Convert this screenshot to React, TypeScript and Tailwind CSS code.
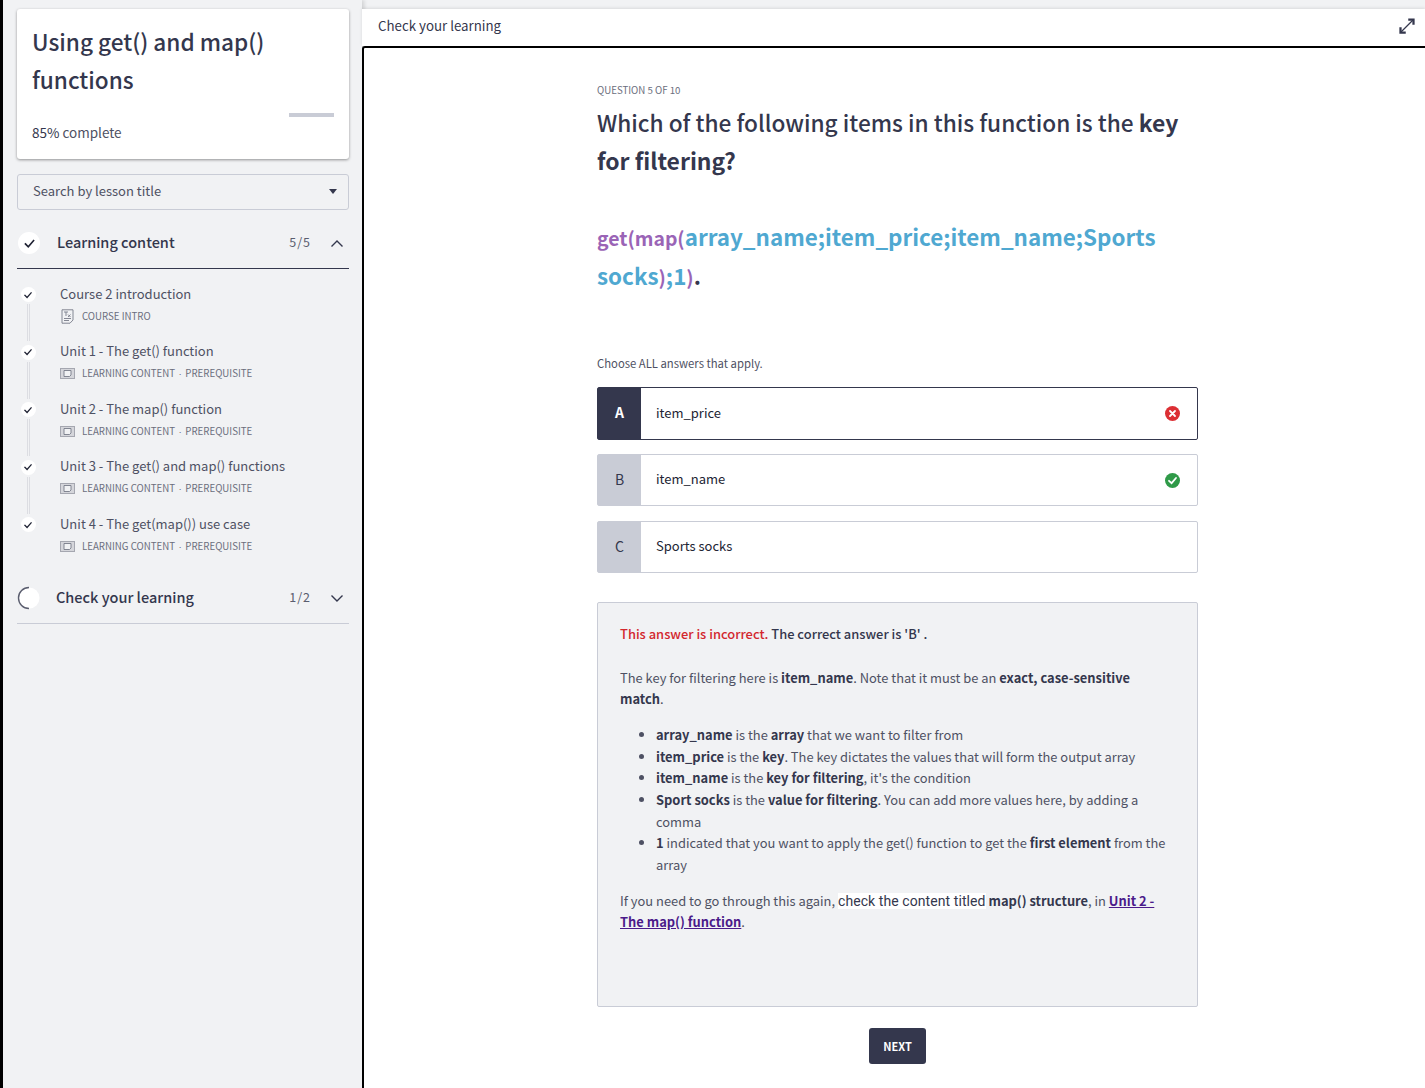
import React from "react";

const FONT = "[font-family:'Noto_Sans_CJK_SC','Source_Sans_Pro',sans-serif]";

function Check({ size, stroke = 2 }: { size: number; stroke?: number }) {
  return (
    <svg width={size} height={size} viewBox="0 0 16 16" fill="none" stroke="#1f2233" strokeWidth={stroke} strokeLinecap="square">
      <path d="M3 8.5 L6.5 12 L13 4.5" />
    </svg>
  );
}

function Chevron({ up }: { up?: boolean }) {
  return (
    <svg width="14" height="9" viewBox="0 0 14 9" fill="none" stroke="#34374d" strokeWidth="1.4">
      <path d={up ? "M1.5 7.5 L7 2 L12.5 7.5" : "M1.5 1.5 L7 7 L12.5 1.5"} />
    </svg>
  );
}

function DocIcon() {
  return (
    <svg width="13" height="15" viewBox="0 0 13 15" fill="none" stroke="#777a88" strokeWidth="0.9">
      <path d="M1 .8 H12 V11 L9 14.2 H1 Z" />
      <path d="M3 3 H7 M5 3 V7 M7 5.5 L9.5 8 M9.5 5.5 L7 8 M3 9.5 H10 M3 11.5 H8" />
    </svg>
  );
}

function SlideIcon() {
  return (
    <svg width="15" height="11" viewBox="0 0 15 11" fill="none">
      <rect x="0.5" y="0.5" width="14" height="10" fill="#d5d6db" stroke="#a5a7b0" />
      <path d="M4 2.5 H11 V7 L9.5 8.5 H4 Z" fill="#f1f2f4" stroke="#777a88" strokeWidth="0.9" />
    </svg>
  );
}

const lessons = [
  { title: "Course 2 introduction", sub: "COURSE INTRO", intro: true },
  { title: "Unit 1 - The get() function", sub: "LEARNING CONTENT", pre: true },
  { title: "Unit 2 - The map() function", sub: "LEARNING CONTENT", pre: true },
  { title: "Unit 3 - The get() and map() functions", sub: "LEARNING CONTENT", pre: true },
  { title: "Unit 4 - The get(map()) use case", sub: "LEARNING CONTENT", pre: true, last: true },
];

function Lesson({ title, sub, intro, last, pre }: { title: string; sub: string; intro?: boolean; last?: boolean; pre?: boolean }) {
  return (
    <div className="flex h-[57.6px]">
      <div className="flex w-[22px] flex-col items-center">
        <div className="flex h-[15px] w-[15px] shrink-0 items-center justify-center rounded-full bg-white">
          <Check size={10} stroke={2} />
        </div>
        {!last && <div className="mt-[2px] h-[37px] w-[3px] border-x border-[#dcdde2]" />}
      </div>
      <div className="ml-[21px] -mt-[3.4px]">
        <div className="h-[20px] whitespace-nowrap text-[13px] leading-[20px] text-[#4e5163]">{title}</div>
        <div className="mt-[4.4px] flex h-[16px] items-center">
          <div className="flex w-[22px] justify-start">{intro ? <span className="ml-[1px] flex"><DocIcon /></span> : <SlideIcon />}</div>
          <span className="whitespace-nowrap text-[9.7px] leading-[16px] text-[#6b6e7d]">
            {sub}
            {pre && (
              <>
                <span className="mx-[3.5px] font-['Liberation_Sans',sans-serif]">·</span>PREREQUISITE
              </>
            )}
          </span>
        </div>
      </div>
    </div>
  );
}

function Section({ title, count, border, up, icon, iconW }: { title: string; count: string; border: string; up?: boolean; icon: React.ReactNode; iconW: string }) {
  return (
    <div className={`flex h-[50px] items-center border-b ${border}`}>
      <div className={`flex justify-start ${iconW}`}>{icon}</div>
      <span className="-mt-[3px] text-[14.5px] font-medium text-[#34374d]">{title}</span>
      <span className="ml-auto -mt-[2px] text-[12.5px] tracking-[1px] text-[#5a5d6e]">{count}</span>
      <span className="ml-[19px] mr-[5px] flex"><Chevron up={up} /></span>
    </div>
  );
}

function Option({ letter, text, selected, status }: { letter: string; text: string; selected?: boolean; status?: "bad" | "good" }) {
  return (
    <div className={`flex h-[52px] rounded-[2px] border bg-white ${selected ? "h-[53px] border-[#34374d]" : "border-[#c9ccd6]"}`}>
      <div className={`flex w-[43px] items-center justify-center pb-[2px] text-[14px] ${selected ? "bg-[#34374d] font-bold text-white" : "bg-[#c9ccd6] text-[#34374d]"}`}>
        {letter}
      </div>
      <div className="ml-[15px] flex items-center pb-[2px] text-[13px] text-[#222433]">{text}</div>
      {status && (
        <div className="ml-auto mr-[17px] flex items-center">
          <svg width="15" height="15" viewBox="0 0 15 15">
            <circle cx="7.5" cy="7.5" r="7.5" fill={status === "bad" ? "#dc2f34" : "#2f9a48"} />
            {status === "bad" ? (
              <path d="M5 5 L10 10 M10 5 L5 10" stroke="#fff" strokeWidth="1.8" strokeLinecap="round" />
            ) : (
              <path d="M4 7.8 L6.6 10.2 L11 5" stroke="#fff" strokeWidth="1.8" fill="none" strokeLinecap="round" />
            )}
          </svg>
        </div>
      )}
    </div>
  );
}

export default function App() {
  return (
    <div className={`flex h-[1088px] w-[1425px] overflow-hidden border-l-[3px] border-black bg-[#f1f2f4] ${FONT}`}>
      <aside className="w-[359px] shrink-0 pl-[14px] pr-[13px] pt-[9px] shadow-[2px_0_4px_rgba(0,0,0,0.15)]">
        <div className="h-[150px] rounded-[3px] bg-white px-[15px] pt-[14px] shadow-[0_1px_3px_rgba(0,0,0,0.4)]">
          <h1 className="text-[22.6px] font-medium leading-[38px] text-[#34374d]">Using get() and map() functions</h1>
          <div className="mt-[14px] flex h-[4px] justify-end">
            <div className="w-[45px] bg-[#c9ccd6]" />
          </div>
          <div className="mt-[4px] text-[13.5px] leading-[22px] text-[#4e5163]">
            <span className="text-[#34374d]">85%</span> complete
          </div>
        </div>
        <div className="mt-[15px] flex h-[36px] items-center justify-between rounded-[3px] border border-[#c9ccd6] pb-[2px] pl-[15px] pr-[11px] text-[13px] text-[#4e5163]">
          <span>Search by lesson title</span>
          <span className="h-0 w-0 border-x-[4px] border-t-[5px] border-x-transparent border-t-[#34374d]" />
        </div>
        <div className="mt-[8px]">
          <Section
            title="Learning content"
            count="5/5"
            up
            iconW="w-[40px] pl-[1px]"
            border="border-[#34374d] h-[51px]"
            icon={
              <span className="flex h-[22px] w-[22px] items-center justify-center rounded-full bg-white">
                <Check size={13} />
              </span>
            }
          />
        </div>
        <div className="pt-[18px]">
          {lessons.map((l) => (
            <Lesson key={l.title} {...l} />
          ))}
        </div>
        <div className="mt-[-1px]">
          <Section
            title="Check your learning"
            count="1/2"
            iconW="w-[39px]"
            border="border-[#c9ccd6]"
            icon={
              <svg width="24" height="24" viewBox="0 0 24 24" fill="none">
                <circle cx="12" cy="12" r="10.5" fill="#fff" />
                <path d="M12 1.5 A10.5 10.5 0 0 0 12 22.5" stroke="#5a5d6e" strokeWidth="1.4" />
              </svg>
            }
          />
        </div>
      </aside>
      <main className="flex min-w-0 flex-1 flex-col pt-[9px]">
        <div className="flex h-[37px] shrink-0 items-center justify-between bg-white pl-[16px] pr-[8px] text-[13.3px] text-[#34374d] shadow-[0_-1px_3px_rgba(0,0,0,0.1)]">
          <span className="pb-[3px]">Check your learning</span>
          <svg className="mb-[4px]" width="20" height="20" viewBox="0 0 16 16" fill="none" stroke="#34374d" strokeWidth="1">
            <path d="M3 13 L13 3" />
            <path d="M9 2.8 H13.2 V7 M2.8 9 V13.2 H7" strokeWidth="1.8" />
          </svg>
        </div>
        <div className="flex-1 rounded-tl-[3px] border-l-2 border-t-2 border-black bg-white">
          <div className="ml-[233px] w-[601px] pt-[34px]">
            <div className="text-[9.7px] leading-[16px] text-[#6b6e7d]">QUESTION 5 OF 10</div>
            <h2 className="mt-[6px] text-[22.65px] font-medium leading-[38px] text-[#34374d]">
              Which of the following items in this function is the <b className="text-[22.9px] font-bold leading-none">key for filtering?</b>
            </h2>
            <p className="mt-[37px] text-[22.4px] font-bold leading-[39px] text-[#4fa8d1]">
              <span className="text-[19.4px] leading-none text-[#9a64b6]">get(map(</span>array_name;item_price;item_name;Sports socks<span className="text-[19.4px] leading-none text-[#9a64b6]">)</span>;1<span className="text-[19.4px] leading-none text-[#9a64b6]">)</span>
              <span className="text-[#34374d]">.</span>
            </p>
            <p className="mt-[58px] text-[11.3px] leading-[20px] text-[#4e5163]">Choose ALL answers that apply.</p>
            <div className="mt-[14px] flex flex-col gap-[14px]">
              <Option letter="A" text="item_price" selected status="bad" />
              <div className="flex flex-col gap-[15px]">
                <Option letter="B" text="item_name" status="good" />
                <Option letter="C" text="Sports socks" />
              </div>
            </div>
            <div className="mt-[29px] h-[405px] rounded-[2px] border border-[#c9ccd6] bg-[#f1f2f4] px-[22px] pt-[20px] text-[12.9px] leading-[21.6px] text-[#34374d]">
              <p className="font-medium">
                <span className="text-[#d3272e]">This answer is incorrect.</span> The correct answer is 'B' .
              </p>
              <p className="mt-[22px] text-[#4e5163]">
                The key for filtering here is <b className="text-[#34374d]">item_name</b>. Note that it must be an <b className="text-[#34374d]">exact, case-sensitive match</b>.
              </p>
              <ul className="mt-[14.4px] list-disc pl-[36px] text-[#4e5163] [&_b]:text-[#34374d]">
                <li><b>array_name</b> is the <b>array</b> that we want to filter from</li>
                <li><b>item_price</b> is the <b>key</b>. The key dictates the values that will form the output array</li>
                <li><b>item_name</b> is the <b>key for filtering</b>, it's the condition</li>
                <li><b>Sport socks</b> is the <b>value for filtering</b>. You can add more values here, by adding a comma</li>
                <li><b>1</b> indicated that you want to apply the get() function to get the <b>first element</b> from the array</li>
              </ul>
              <p className="mt-[14.4px] text-[#4e5163]">
                If you need to go through this again, <span className="bg-white font-['Roboto',sans-serif] text-[14px] leading-[16px] tracking-[0.08px] text-[#34374d]">check the content titled</span>{" "}
                <b className="text-[#34374d]">map() structure</b>, in{" "}
                <a className="font-bold text-[#4b1a8a] underline">Unit 2 - The map() function</a>.
              </p>
            </div>
            <div className="mt-[21px] flex justify-center">
              <button className="h-[36px] w-[57px] rounded-[3px] bg-[#34374d] text-[11px] font-bold text-white">NEXT</button>
            </div>
          </div>
        </div>
      </main>
    </div>
  );
}
